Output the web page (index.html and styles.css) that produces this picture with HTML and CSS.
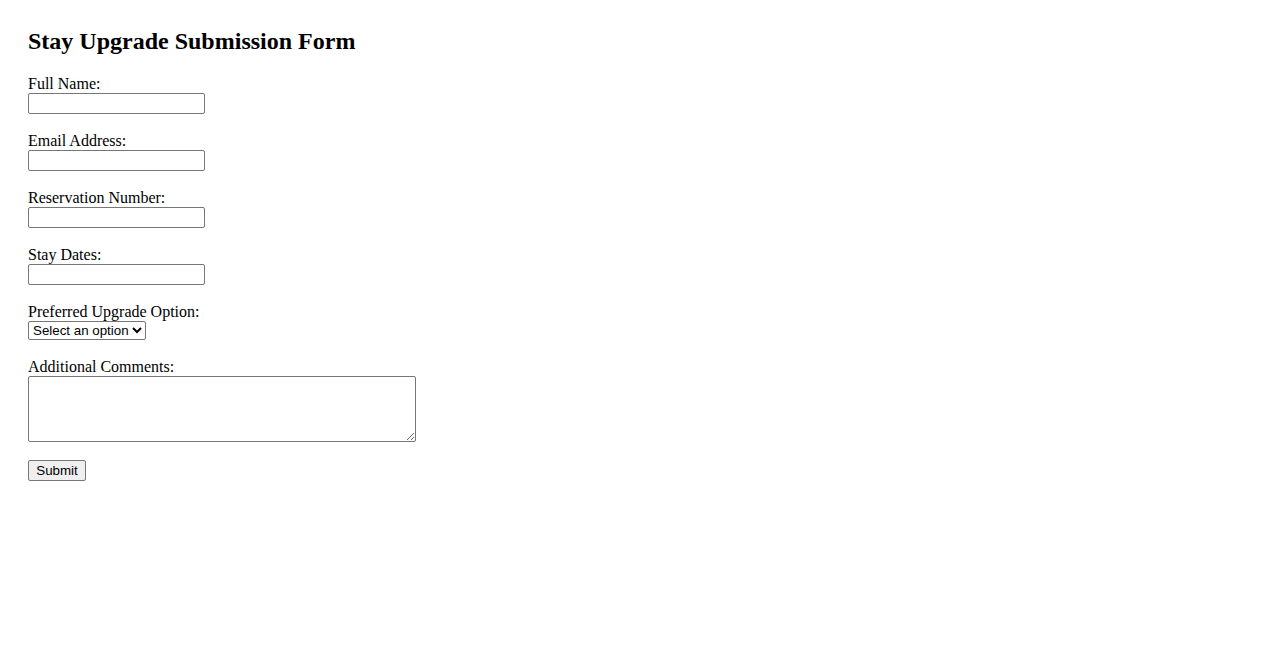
FILE: index.html
```html
<!DOCTYPE html>
<html lang="en">
<head>
<meta charset="utf-8">
<title>Stay Upgrade Submission Form</title>
<link rel="stylesheet" href="styles.css">
</head>
<body>
<div class="page">
  <h2 class="title">Stay Upgrade Submission Form</h2>
  <form class="form">
    <div class="field">
      <label class="label" for="name">Full Name:</label>
      <input class="text-input" type="text" id="name">
    </div>
    <div class="field">
      <label class="label" for="email">Email Address:</label>
      <input class="text-input" type="email" id="email">
    </div>
    <div class="field">
      <label class="label" for="res">Reservation Number:</label>
      <input class="text-input" type="text" id="res">
    </div>
    <div class="field">
      <label class="label" for="dates">Stay Dates:</label>
      <input class="text-input" type="text" id="dates">
    </div>
    <div class="field">
      <label class="label" for="opt">Preferred Upgrade Option:</label>
      <select class="select" id="opt">
        <option>Select an option</option>
      </select>
    </div>
    <div class="field">
      <label class="label" for="comments">Additional Comments:</label>
      <textarea class="textarea" id="comments"></textarea>
    </div>
    <div class="field">
      <button class="submit" type="button">Submit</button>
    </div>
  </form>
</div>
</body>
</html>
```

FILE: styles.css
```css
html, body {
  margin: 0;
  padding: 0;
  background: #ffffff;
}

body {
  font-family: "Liberation Serif", "Times New Roman", serif;
  font-size: 16px;
  color: #000000;
}

.page {
  padding: 28px;
}

.title {
  margin: 0 0 20px 0;
  font-size: 24px;
  line-height: 27px;
  font-weight: bold;
}

.form {
  display: flex;
  flex-direction: column;
  align-items: flex-start;
}

.field {
  display: flex;
  flex-direction: column;
  align-items: flex-start;
  margin-bottom: 18px;
}

.label {
  line-height: 18px;
}

.text-input {
  box-sizing: border-box;
  width: 177px;
  height: 21px;
  margin: 0;
  padding: 1px 2px;
  border: 1px solid #767676;
  border-radius: 2px;
  font-family: "Liberation Sans", Arial, sans-serif;
  font-size: 13.33px;
  background: #ffffff;
}

.select {
  box-sizing: border-box;
  width: 118px;
  height: 19px;
  margin: 0;
  border: 1px solid #767676;
  border-radius: 2px;
  font-family: "Liberation Sans", Arial, sans-serif;
  font-size: 13.33px;
  color: #000000;
  background: #ffffff;
}

.textarea {
  box-sizing: border-box;
  width: 388px;
  height: 66px;
  margin: 0;
  padding: 2px;
  border: 1px solid #767676;
  border-radius: 2px;
  font-family: "Liberation Mono", monospace;
  font-size: 13.33px;
}

.submit {
  box-sizing: border-box;
  width: 58px;
  height: 21px;
  margin: 0;
  padding: 1px 6px;
  border: 1px solid #767676;
  border-radius: 2px;
  background: #efefef;
  font-family: "Liberation Sans", Arial, sans-serif;
  font-size: 13.33px;
  color: #000000;
}
```
